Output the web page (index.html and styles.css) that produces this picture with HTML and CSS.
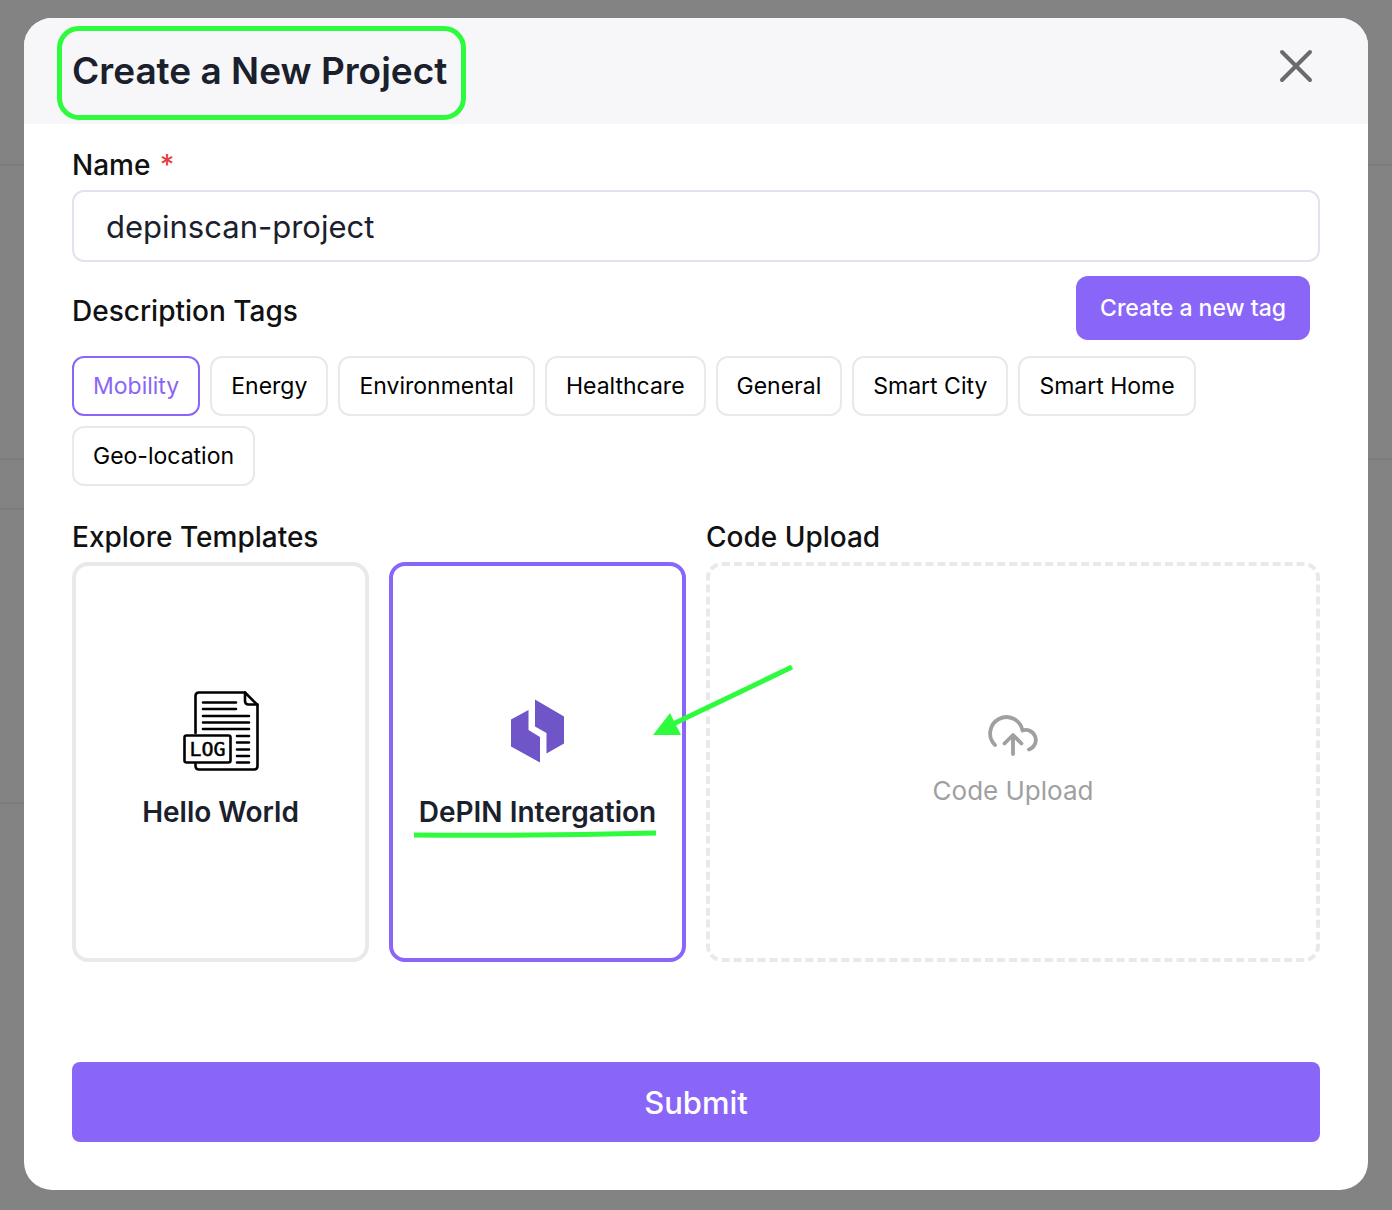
FILE: index.html
```html
<!DOCTYPE html>
<html lang="en">
<head>
<meta charset="utf-8">
<meta name="viewport" content="width=device-width, initial-scale=1">
<title>Create a New Project</title>
<link rel="stylesheet" href="styles.css">
</head>
<body>
<div class="backdrop">
  <main class="modal" role="dialog" aria-labelledby="modal-title">
    <header class="modal-header">
      <h1 class="modal-title" id="modal-title">Create a New Project</h1>
      <button class="close" type="button" aria-label="Close">
        <svg width="36" height="36" viewBox="0 0 36 36" fill="none" stroke="#6b6b6b" stroke-width="4" stroke-linecap="round"><path d="M4 4L32 32M32 4L4 32"/></svg>
      </button>
    </header>
    <form class="modal-body">
      <label class="label" for="name">Name <span class="required">*</span></label>
      <input class="name-input" id="name" type="text" value="depinscan-project">

      <div class="tags-header">
        <h2 class="label">Description Tags</h2>
        <button class="new-tag" type="button">Create a new tag</button>
      </div>
      <div class="tags">
        <button class="tag tag-selected" type="button">Mobility</button>
        <button class="tag" type="button">Energy</button>
        <button class="tag" type="button">Environmental</button>
        <button class="tag" type="button">Healthcare</button>
        <button class="tag" type="button">General</button>
        <button class="tag" type="button">Smart City</button>
        <button class="tag" type="button">Smart Home</button>
        <button class="tag" type="button">Geo-location</button>
      </div>

      <div class="sources">
        <section class="source">
          <h2 class="label">Explore Templates</h2>
          <div class="templates">
            <button class="card" type="button">
              <svg class="card-icon" width="80" height="80" viewBox="0 0 80 80" fill="none" stroke="#000" stroke-width="2.6" stroke-linecap="round" stroke-linejoin="round">
                <path d="M14.500 42V5Q14.500 1.500 18 1.500H64L76.500 14V75Q76.500 78.500 73 78.500H18Q14.500 78.500 14.500 75V73"/>
                <path d="M64 1.500V10Q64 13.500 67.500 13.500H76.500"/>
                <path d="M22 11.500H55M22 18H55M22 25H68M22 31.500H68M22 38H68M56 45H68M56 51.500H68M56 58.500H68M56 65H68M56 71.500H68"/>
                <rect x="3.500" y="44.500" width="46" height="27" rx="2"/>
                <text class="log-text" x="26.500" y="65" text-anchor="middle">LOG</text>
              </svg>
              <span class="card-name">Hello World</span>
            </button>
            <button class="card card-selected" type="button">
              <svg class="card-icon" width="80" height="80" viewBox="0 0 80 80" fill="#6f55c8">
                <path d="M37 8.500L66 25.500V52.500L48.500 62.500V42L37 35.500Z"/>
                <path d="M30.500 19V39L42 46V71.500L13 55.500V28.500Z"/>
              </svg>
              <span class="card-name">DePIN Intergation
                <svg class="underline" width="242" height="8" viewBox="0 0 242 8" fill="none" stroke="#2efb3e" stroke-width="5"><path d="M0 5Q120 6 242 3"/></svg>
              </span>
              <svg class="arrow" width="142" height="74" viewBox="0 0 142 74"><path d="M20 60L139 3" stroke="#2efb3e" stroke-width="5"/><path d="M0 71L17 49L28 71Z" fill="#2efb3e"/></svg>
            </button>
          </div>
        </section>
        <section class="source">
          <h2 class="label">Code Upload</h2>
          <button class="upload" type="button">
            <svg width="50" height="42" viewBox="0 0 50 42" fill="none" stroke="#a0a0a0" stroke-width="3.800" stroke-linecap="round" stroke-linejoin="round"><path d="M7 30A16.300 16.300 0 1 1 34.500 15.500A9.800 9.800 0 0 1 41 34.500M25 39V21M16.500 28.500L25 20L33.500 28.500"/></svg>
            <span>Code Upload</span>
          </button>
        </section>
      </div>

      <button class="submit" type="submit">Submit</button>
    </form>
  </main>
</div>
</body>
</html>
```
FILE: styles.css
```css
* { box-sizing: border-box; }

body {
  margin: 0;
  font-family: Inter, "Liberation Sans", sans-serif;
  color: #111;
}

button, input { font: inherit; color: inherit; }
button { cursor: pointer; }
h1, h2 { margin: 0; }

/* Dimmed page rows behind the dialog */
.backdrop {
  min-height: 100vh;
  padding: 18px 24px 20px;
  background:
    linear-gradient(#7b7b7b, #7b7b7b) 0 164px / 100% 2px no-repeat,
    linear-gradient(#7b7b7b, #7b7b7b) 0 458px / 100% 2px no-repeat,
    linear-gradient(#7b7b7b, #7b7b7b) 0 508px / 24px 2px no-repeat,
    linear-gradient(#7b7b7b, #7b7b7b) 0 802px / 24px 2px no-repeat,
    #838383;
}

.modal {
  overflow: hidden;
  border-radius: 28px;
  background: #fff;
}

.modal-header {
  display: flex;
  justify-content: space-between;
  align-items: flex-start;
  padding: 8px 54px 4px 33px;
  background: #f7f7f9;
}

.modal-title {
  padding: 16px 14px 20px 10px;
  border: 5px solid #2efb3e;
  border-radius: 22px;
  font-size: 37px;
  font-weight: 600;
  line-height: 48px;
  color: #1a202c;
}

.close {
  display: flex;
  margin-top: 22px;
  padding: 0;
  border: 0;
  background: none;
}

.modal-body {
  display: flex;
  flex-direction: column;
  padding: 24px 48px 48px;
}

.label {
  font-size: 28px;
  font-weight: 500;
  line-height: 34px;
}

.required {
  margin-left: 2px;
  color: #e53e3e;
}

.name-input {
  width: 100%;
  height: 72px;
  margin-top: 8px;
  padding: 0 32px;
  border: 2px solid #dfe3f0;
  border-radius: 12px;
  background: #fff;
  font-size: 31px;
  color: #1a202c;
}

.tags-header {
  display: flex;
  justify-content: space-between;
  align-items: flex-end;
  margin-top: 14px;
  padding-right: 10px;
}

.tags-header .label { padding-bottom: 12px; }

.new-tag {
  height: 64px;
  padding: 0 24px;
  border: 0;
  border-radius: 12px;
  background: #8a66f8;
  font-size: 23px;
  font-weight: 500;
  color: #fff;
}

.tags {
  display: flex;
  flex-wrap: wrap;
  gap: 10px;
  margin-top: 16px;
}

.tag {
  height: 60px;
  padding: 0 19px;
  border: 2px solid #e9e9e9;
  border-radius: 12px;
  background: #fff;
  font-size: 23px;
  color: #000;
}

.tag-selected {
  border-color: #8a66f8;
  color: #8a66f8;
}

.sources {
  display: grid;
  grid-template-columns: 1fr 1fr;
  gap: 20px;
  margin-top: 34px;
}

.source {
  display: flex;
  flex-direction: column;
  gap: 8px;
}

.templates {
  display: grid;
  grid-template-columns: 1fr 1fr;
  gap: 20px;
}

.card, .upload {
  display: flex;
  flex-direction: column;
  align-items: center;
  justify-content: center;
  height: 400px;
  padding: 0;
  border: 4px solid #e9e9e9;
  border-radius: 16px;
  background: #fff;
}

.card {
  position: relative;
  gap: 24px;
  padding-bottom: 4px;
}

.card-selected { border-color: #8a66f8; }

.card-name {
  position: relative;
  font-size: 28px;
  font-weight: 600;
  line-height: 34px;
  white-space: nowrap;
  color: #1a202c;
}

.log-text {
  font-family: "DejaVu Sans Mono", monospace;
  font-size: 20px;
  fill: #000;
  stroke-width: 0.5;
}

.underline {
  position: absolute;
  top: 35px;
  left: -5px;
}

.arrow {
  position: absolute;
  top: 98px;
  left: 260px;
  z-index: 1;
}

.upload {
  gap: 16px;
  border-style: dashed;
  font-size: 26px;
  line-height: 36px;
  color: #a0a0a0;
}

.submit {
  height: 80px;
  margin-top: 100px;
  border: 0;
  border-radius: 8px;
  background: #8a66f8;
  font-size: 31px;
  font-weight: 500;
  color: #fff;
}
```
